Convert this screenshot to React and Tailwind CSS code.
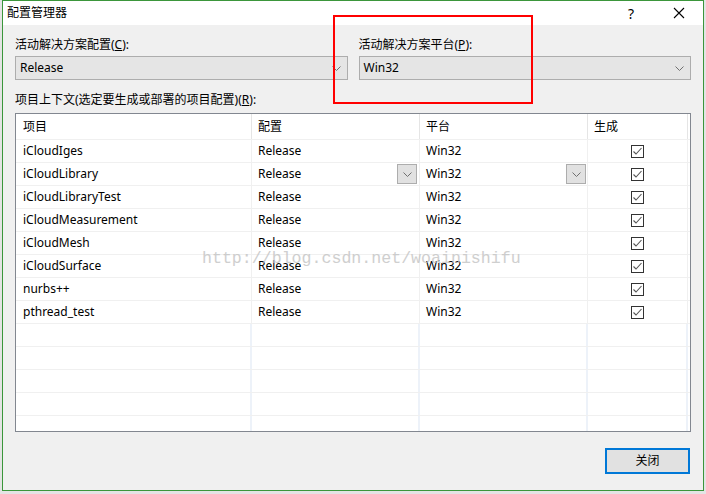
import React from "react";

const ROWS = [
  "iCloudIges",
  "iCloudLibrary",
  "iCloudLibraryTest",
  "iCloudMeasurement",
  "iCloudMesh",
  "iCloudSurface",
  "nurbs++",
  "pthread_test",
];

const FONT = {
  fontFamily: '"Noto Sans", "Noto Sans CJK SC", sans-serif',
};

function Chevron({ className = "" }) {
  return (
    <svg width="9" height="5" viewBox="0 0 9 5" className={className}>
      <polyline points="0.5,0.5 4.5,4.5 8.5,0.5" fill="none" stroke="#707070" strokeWidth="1" />
    </svg>
  );
}

function Checkbox() {
  return (
    <div className="w-[13px] h-[13px] border border-[#333] bg-white flex items-center justify-center">
      <svg width="11" height="11" viewBox="0 0 11 11">
        <polyline points="1.5,5.5 4,8 9.5,2" fill="none" stroke="#555" strokeWidth="1.1" />
      </svg>
    </div>
  );
}

function MiniDrop() {
  return (
    <div className="w-[20px] h-[20px] bg-[#e1e1e1] border border-[#adadad] flex items-center justify-center">
      <Chevron />
    </div>
  );
}

function Select({ value }) {
  return (
    <div className="h-[24px] bg-[#e5e5e5] border border-[#adadad] flex items-center justify-between pl-[4px] pr-[6px]">
      <span>{value}</span>
      <Chevron />
    </div>
  );
}

export default function App() {
  return (
    <div className="w-[706px] h-[494px] bg-[#e4e4e4] relative overflow-hidden text-[12px] text-black" style={FONT}>
      <div className="absolute left-[2px] top-0 w-[702px] h-[491px] border border-[#3b963b] bg-[#f0f0f0] flex flex-col">
        {/* title bar */}
        <div className="h-[24px] bg-white flex items-center pl-[4px]">
          <span className="flex-1">配置管理器</span>
          <span className="w-[46px] text-center text-[14px] mr-[2px]">?</span>
          <div className="w-[46px] flex justify-center mr-[1px]">
            <svg width="12" height="12" viewBox="0 0 12 12">
              <path d="M1 1 L11 11 M11 1 L1 11" stroke="#000" strokeWidth="1.1" />
            </svg>
          </div>
        </div>

        <div className="px-[12px] flex flex-col flex-1">
          <div className="grid grid-cols-2 gap-[11px] mt-[11px]">
            <div>
              <div className="h-[18px] leading-[18px] mb-[2px]">活动解决方案配置(<u>C</u>):</div>
              <Select value="Release" />
            </div>
            <div>
              <div className="h-[18px] leading-[18px] mb-[2px]">活动解决方案平台(<u>P</u>):</div>
              <Select value="Win32" />
            </div>
          </div>

          <div className="h-[18px] leading-[18px] mt-[11px] mb-[4px]">
            项目上下文(选定要生成或部署的项目配置)(<u>R</u>):
          </div>

          {/* table */}
          <div className="w-[676px] h-[319px] border border-[#828790] bg-white overflow-hidden">
            <div className="flex h-[25px]">
              <div className="w-[236px] pl-[7px] flex items-center border-r border-[#e5e5e5]">项目</div>
              <div className="w-[168px] pl-[6px] flex items-center border-r border-[#e5e5e5]">配置</div>
              <div className="w-[168px] pl-[6px] flex items-center border-r border-[#e5e5e5]">平台</div>
              <div className="w-[100px] pl-[6px] flex items-center border-r border-[#e5e5e5]">生成</div>
            </div>
            {ROWS.map((name, i) => (
              <div key={name} className="flex h-[23px] border-t border-[#f0f0f0]">
                <div className="w-[236px] pl-[7px] flex items-center border-r border-[#f0f0f0]">{name}</div>
                <div className="w-[168px] pl-[6px] pr-[2px] flex items-center justify-between border-r border-[#f0f0f0]">
                  <span>Release</span>
                  {i === 1 && <MiniDrop />}
                </div>
                <div className="w-[168px] pl-[6px] pr-[1px] flex items-center justify-between border-r border-[#f0f0f0]">
                  <span>Win32</span>
                  {i === 1 && <MiniDrop />}
                </div>
                <div className="w-[100px] flex items-center justify-center border-r border-[#f0f0f0]">
                  <Checkbox />
                </div>
              </div>
            ))}
            {[0, 1, 2, 3, 4].map((i) => (
              <div key={i} className="flex h-[23px] border-t border-[#f0f0f0]">
                <div className="w-[236px] border-r-2 border-[#edf2f9]" />
                <div className="w-[168px] border-r-2 border-[#edf2f9]" />
                <div className="w-[168px] border-r-2 border-[#edf2f9]" />
                <div className="w-[100px] border-r-2 border-[#edf2f9]" />
              </div>
            ))}
          </div>

          <div className="flex justify-end mt-[16px] pr-[1px]">
            <div className="w-[85px] h-[26px] border-2 border-[#0078d7] bg-[#e1e1e1] flex items-center justify-center">
              关闭
            </div>
          </div>
        </div>
      </div>

      {/* red highlight box */}
      <div className="absolute left-[333px] top-[15px] w-[200px] h-[89px] border-2 border-[#ff0000]" />

      {/* watermark */}
      <div
        className="absolute left-[202px] top-[247px] text-[16.6px] text-[#c4c4c4] opacity-80"
        style={{ fontFamily: '"Liberation Mono", monospace' }}
      >
        http://blog.csdn.net/woainishifu
      </div>
    </div>
  );
}
